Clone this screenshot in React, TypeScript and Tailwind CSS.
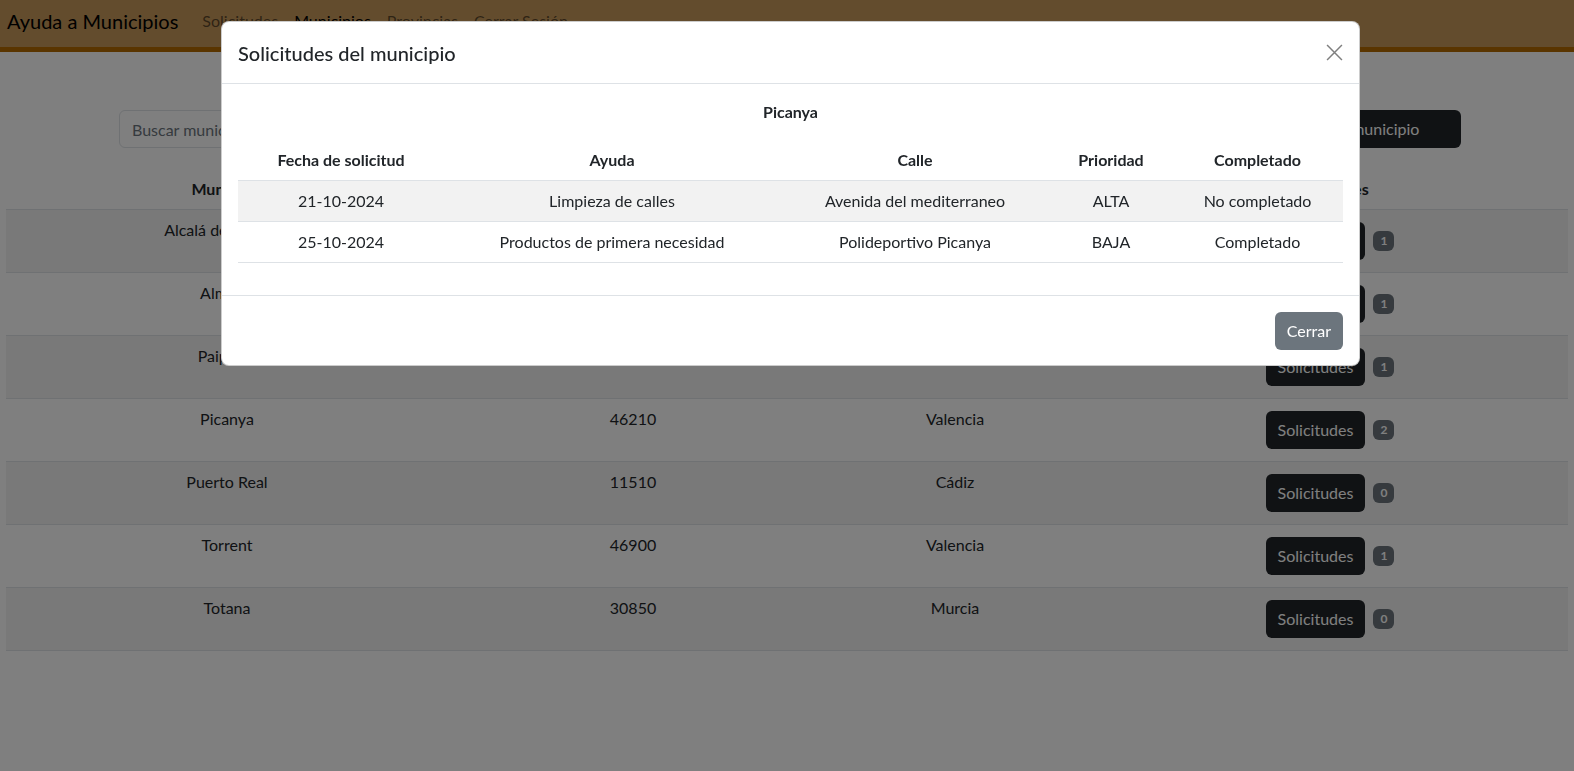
import React from "react";

type Municipio = {
  nombre: string;
  cp: string;
  provincia: string;
  solicitudes: number;
};

const municipios: Municipio[] = [
  { nombre: "Alcalá de Henares", cp: "28801", provincia: "Madrid", solicitudes: 1 },
  { nombre: "Almería", cp: "04001", provincia: "Almería", solicitudes: 1 },
  { nombre: "Paiporta", cp: "46200", provincia: "Valencia", solicitudes: 1 },
  { nombre: "Picanya", cp: "46210", provincia: "Valencia", solicitudes: 2 },
  { nombre: "Puerto Real", cp: "11510", provincia: "Cádiz", solicitudes: 0 },
  { nombre: "Torrent", cp: "46900", provincia: "Valencia", solicitudes: 1 },
  { nombre: "Totana", cp: "30850", provincia: "Murcia", solicitudes: 0 },
];

const solicitudes = [
  {
    fecha: "21-10-2024",
    ayuda: "Limpieza de calles",
    calle: "Avenida del mediterraneo",
    prioridad: "ALTA",
    completado: "No completado",
  },
  {
    fecha: "25-10-2024",
    ayuda: "Productos de primera necesidad",
    calle: "Polideportivo Picanya",
    prioridad: "BAJA",
    completado: "Completado",
  },
];

const App: React.FC = () => {
  return (
    <div className="relative min-h-screen bg-white text-[16px] leading-6 text-[#212529] font-['Lato','Liberation_Sans',sans-serif]">
      {/* navbar */}
      <nav className="flex h-[52px] items-center border-b-[5px] border-[#b46a00] bg-[#c6985a] px-[7px] pb-[5px]">
        <span className="mr-4 text-[20px] leading-[30px] text-black">Ayuda a Municipios</span>
        <a className="px-2 text-black/55">Solicitudes</a>
        <a className="px-2 text-black">Municipios</a>
        <a className="px-2 text-black/55">Provincias</a>
        <a className="px-2 text-black/55">Cerrar Sesión</a>
      </nav>

      {/* search */}
      <div className="mt-[58px] flex gap-3 pl-[119px] pr-[113px]">
        <input
          placeholder="Buscar municipio"
          className="h-[38px] flex-1 rounded-md border border-[#dee2e6] px-3 text-[16px] placeholder:text-[#6c757d]"
        />
        <button className="h-[38px] w-[199px] rounded-md bg-[#212529] pl-[38px] text-left text-white">
          Buscar municipio
        </button>
      </div>

      {/* table */}
      <div className="mt-[21px] px-[6px]">
        <table className="w-full table-fixed border-collapse text-center">
          <colgroup>
            <col className="w-[442px]" />
            <col className="w-[370px]" />
            <col className="w-[274px]" />
            <col />
          </colgroup>
          <thead>
            <tr className="border-b border-[#dee2e6]">
              <th className="p-2 font-bold">Municipio</th>
              <th className="p-2 font-bold">Código postal</th>
              <th className="p-2 font-bold">Provincia</th>
              <th className="p-2 font-bold">Solicitudes</th>
            </tr>
          </thead>
          <tbody>
            {municipios.map((m, i) => (
              <tr
                key={m.nombre}
                className={`border-b border-[#dee2e6] ${i % 2 === 0 ? "bg-[#f2f2f2]" : "bg-white"}`}
              >
                <td className="p-2 align-top">{m.nombre}</td>
                <td className="p-2 align-top">{m.cp}</td>
                <td className="p-2 align-top">{m.provincia}</td>
                <td className="p-2 align-top">
                  <div className="flex items-center justify-center">
                    <button className="my-1 h-[38px] rounded-md bg-[#212529] px-3 text-white">
                      Solicitudes
                    </button>
                    <span className="ml-2 rounded-md bg-[#6c757d] px-[7px] py-[3px] text-[12px] font-bold leading-[14px] text-white">
                      {m.solicitudes}
                    </span>
                  </div>
                </td>
              </tr>
            ))}
          </tbody>
        </table>
      </div>

      {/* modal */}
      <div className="fixed inset-0 bg-black/50">
        <div className="ml-[221px] mt-[21px] w-[1139px] rounded-lg border border-black/20 bg-white">
          <div className="flex h-[62px] items-center justify-between border-b border-[#dee2e6] px-4">
            <h5 className="text-[20px] font-medium leading-[30px]">Solicitudes del municipio</h5>
            <button className="mr-[-3px] flex h-6 w-6 items-center justify-center text-black/50">
              <svg width="17" height="17" viewBox="0 0 16 16" fill="none" stroke="currentColor" strokeWidth="1.4">
                <path d="M1 1l14 14M15 1L1 15" />
              </svg>
            </button>
          </div>
          <div className="p-4">
            <p className="mb-4 text-center font-bold">Picanya</p>
            <table className="mb-4 w-full table-fixed border-collapse text-center">
              <colgroup>
                <col className="w-[206px]" />
                <col className="w-[336px]" />
                <col className="w-[270px]" />
                <col className="w-[122px]" />
                <col />
              </colgroup>
              <thead>
                <tr className="border-b border-[#dee2e6]">
                  <th className="p-2 font-bold">Fecha de solicitud</th>
                  <th className="p-2 font-bold">Ayuda</th>
                  <th className="p-2 font-bold">Calle</th>
                  <th className="p-2 font-bold">Prioridad</th>
                  <th className="p-2 font-bold">Completado</th>
                </tr>
              </thead>
              <tbody>
                {solicitudes.map((s, i) => (
                  <tr
                    key={s.fecha}
                    className={`border-b border-[#dee2e6] ${i % 2 === 0 ? "bg-[#f2f2f2]" : "bg-white"}`}
                  >
                    <td className="p-2">{s.fecha}</td>
                    <td className="p-2">{s.ayuda}</td>
                    <td className="p-2">{s.calle}</td>
                    <td className="p-2">{s.prioridad}</td>
                    <td className="p-2">{s.completado}</td>
                  </tr>
                ))}
              </tbody>
            </table>
          </div>
          <div className="flex justify-end border-t border-[#dee2e6] px-[12px] pb-[11px] pt-[12px]">
            <button className="m-1 h-[38px] rounded-md bg-[#6c757d] px-3 text-white">Cerrar</button>
          </div>
        </div>
      </div>
    </div>
  );
};

export default App;
